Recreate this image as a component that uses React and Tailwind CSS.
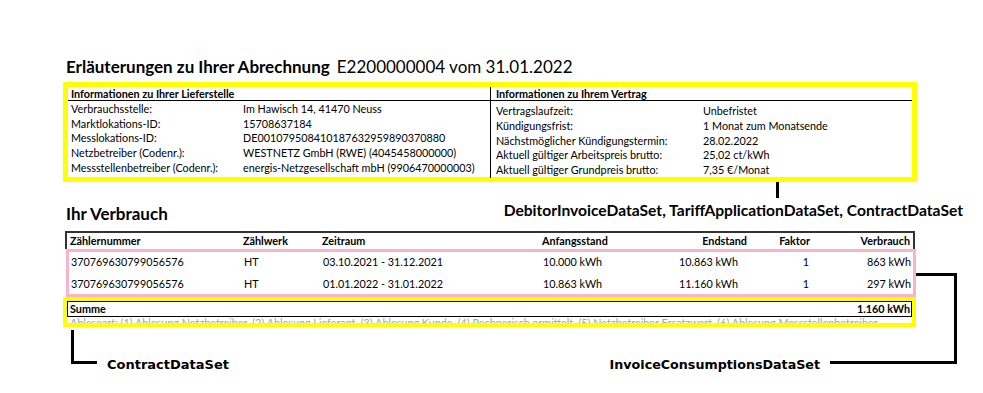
import React from 'react';

const font = { fontFamily: 'Lato, "Open Sans", sans-serif' };
const labelFont = { fontFamily: '"DejaVu Sans", Verdana, sans-serif' };

const lieferstelle = [
  ['Verbrauchsstelle:', 'Im Hawisch 14, 41470 Neuss'],
  ['Marktlokations-ID:', '15708637184'],
  ['Messlokations-ID:', 'DE001079508410187632959890370880'],
  ['Netzbetreiber (Codenr.):', 'WESTNETZ GmbH (RWE) (4045458000000)'],
  ['Messstellenbetreiber (Codenr.):', 'energis-Netzgesellschaft mbH (9906470000003)'],
];

const vertrag = [
  ['Vertragslaufzeit:', 'Unbefristet'],
  ['Kündigungsfrist:', '1 Monat zum Monatsende'],
  ['Nächstmöglicher Kündigungstermin:', '28.02.2022'],
  ['Aktuell gültiger Arbeitspreis brutto:', '25,02 ct/kWh'],
  ['Aktuell gültiger Grundpreis brutto:', '7,35 €/Monat'],
];

const rows = [
  ['370769630799056576', 'HT', '03.10.2021 - 31.12.2021', '10.000 kWh', '10.863 kWh', '1', '863 kWh'],
  ['370769630799056576', 'HT', '01.01.2022 - 31.01.2022', '10.863 kWh', '11.160 kWh', '1', '297 kWh'],
];

const cols = 'grid grid-cols-[173px_79px_220px_120px_85px_63px_100px] pl-[3px]';

export default function App() {
  return (
    <div className="relative w-[983px] h-[393px] bg-white text-black overflow-hidden" style={font}>
      <div className="pl-[63px] pt-[56px]">
        <h1 className="pl-[3px] text-[17px] leading-[22px] flex gap-[7px]">
          <span className="font-bold">Erläuterungen zu Ihrer Abrechnung</span>
          <span>E2200000004 vom 31.01.2022</span>
        </h1>

        <div className="mt-[4px] w-[854px] h-[100px] border-[5px] border-[#ffff00] grid grid-cols-[423px_1fr] text-[10.8px]">
          <div className="border-r border-black">
            <div className="h-[14px] border-b border-black pl-[3px] font-bold leading-[14px]">
              Informationen zu Ihrer Lieferstelle
            </div>
            <div className="pt-[1px]">
              {lieferstelle.map(([k, v]) => (
                <div key={k} className="grid grid-cols-[172px_1fr] pl-[3px] h-[14.7px] leading-[14.7px]">
                  <span>{k}</span>
                  <span>{v}</span>
                </div>
              ))}
            </div>
          </div>
          <div>
            <div className="h-[14px] border-b border-black pl-[5px] font-bold leading-[14px]">
              Informationen zu Ihrem Vertrag
            </div>
            <div className="pt-[3px]">
              {vertrag.map(([k, v]) => (
                <div key={k} className="grid grid-cols-[207px_1fr] pl-[5px] h-[14.8px] leading-[14.8px]">
                  <span>{k}</span>
                  <span>{v}</span>
                </div>
              ))}
            </div>
          </div>
        </div>

        <div className="mt-[22px] w-[900px] flex items-center justify-between pl-[3px]">
          <h2 className="font-bold text-[17px] leading-[20px]">Ihr Verbrauch</h2>
          <span className="font-bold text-[15.6px] leading-[20px] mt-[-8px]">
            DebitorInvoiceDataSet, TariffApplicationDataSet, ContractDataSet
          </span>
        </div>

        <div className="mt-[7px] w-[853px] text-[10.8px]">
          <div className="ml-[2px] w-[850px] h-[18px] border-2 border-b-0 border-[#333333] font-bold leading-[16px]">
            <div className={cols}>
              <span>Zählernummer</span>
              <span>Zählwerk</span>
              <span>Zeitraum</span>
              <span>Anfangsstand</span>
              <span className="text-right">Endstand</span>
              <span className="text-right">Faktor</span>
              <span className="text-right">Verbrauch</span>
            </div>
          </div>
          <div className="ml-[3px] w-[850px] h-[48px] border-[3px] border-[#f8b5c9] flex flex-col justify-center">
            {rows.map((r, i) => (
              <div key={i} className={cols + ' h-[22px] shrink-0 leading-[22px] -ml-[1px]'}>
                <span>{r[0]}</span>
                <span>{r[1]}</span>
                <span>{r[2]}</span>
                <span>{r[3]}</span>
                <span className="text-right pr-[10px]">{r[4]}</span>
                <span className="text-right pr-[2px]">{r[5]}</span>
                <span className="text-right">{r[6]}</span>
              </div>
            ))}
          </div>
          <div className="w-[853px] h-[30px] border-4 border-[#ffff00] overflow-hidden">
            <div className="h-[16px] border border-black font-bold leading-[14px]">
              <div className={cols + ' -ml-[1px]'}>
                <span>Summe</span>
                <span />
                <span />
                <span />
                <span />
                <span />
                <span className="text-right">1.160 kWh</span>
              </div>
            </div>
            <div className="pl-[3px] text-[10.8px] leading-[11px] text-[#a6a6a6] whitespace-nowrap">
              Ableseart: (1) Ablesung Netzbetreiber, (2) Ablesung Lieferant, (3) Ablesung Kunde, (4) Rechnerisch ermittelt, (5) Netzbetreiber Ersatzwert, (6) Ablesung Messstellenbetreiber
            </div>
          </div>
        </div>

        <div className="mt-[29px] w-[757px] flex justify-between font-bold text-[13px] leading-[18px]" style={labelFont}>
          <span className="ml-[44px]">ContractDataSet</span>
          <span className="text-[12.7px]">InvoiceConsumptionsDataSet</span>
        </div>
      </div>

      {/* annotation connectors */}
      <div className="absolute left-[776px] top-[182px] w-[3px] h-[16px] bg-black" />
      <div className="absolute left-[71px] top-[330px] w-[26px] h-[34px] border-l-[3px] border-b-[3px] border-black" />
      <div className="absolute left-[916px] top-[273px] w-[41px] h-[3px] bg-black" />
      <div className="absolute left-[830px] top-[273px] w-[127px] h-[91px] border-r-[3px] border-b-[3px] border-black" />
    </div>
  );
}
